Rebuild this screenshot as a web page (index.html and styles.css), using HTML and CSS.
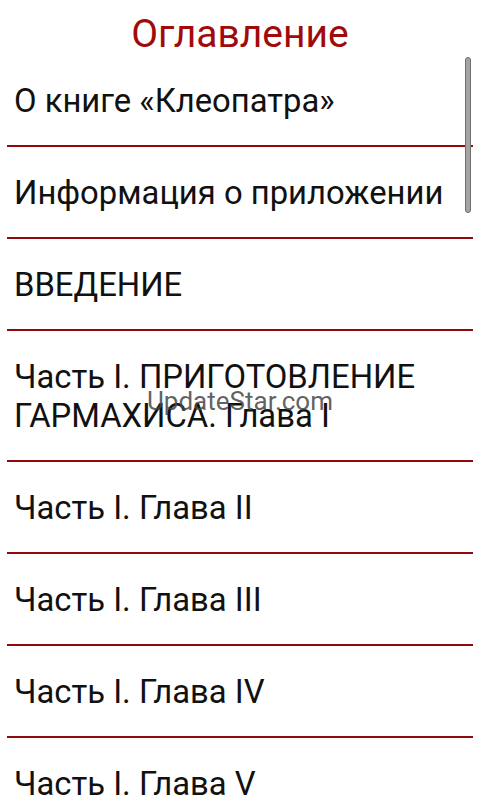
FILE: index.html
```html
<!DOCTYPE html>
<html lang="ru">
<head>
<meta charset="utf-8">
<title>Оглавление</title>
<link rel="stylesheet" href="styles.css">
</head>
<body>
<div class="screen">
  <header class="title">Оглавление</header>
  <ul class="toc">
    <li class="item">О книге «Клеопатра»</li>
    <li class="item">Информация о приложении</li>
    <li class="item">ВВЕДЕНИЕ</li>
    <li class="item">Часть I. ПРИГОТОВЛЕНИЕ ГАРМАХИСА. Глава I</li>
    <li class="item">Часть I. Глава II</li>
    <li class="item">Часть I. Глава III</li>
    <li class="item">Часть I. Глава IV</li>
    <li class="item">Часть I. Глава V</li>
  </ul>
  <div class="scrollbar"></div>
  <div class="watermark">UpdateStar.com</div>
</div>
</body>
</html>
```
FILE: styles.css
```css
html, body {
  margin: 0;
  padding: 0;
  background: #fff;
}
body {
  font-family: Roboto, "Noto Sans", sans-serif;
  color: #111;
}
.screen {
  position: relative;
  width: 480px;
  height: 800px;
  overflow: hidden;
}
.title {
  height: 55px;
  display: flex;
  align-items: center;
  justify-content: center;
  font-size: 39px;
  color: #a00a0a;
  padding-top: 12px;
  box-sizing: border-box;
}
.toc {
  list-style: none;
  margin: 0;
  padding: 0 7px;
}
.item {
  padding: 27px 7px 24px 7px;
  font-size: 32.8px;
  line-height: 39px;
  border-bottom: 2px solid #8e0b0b;
}
.scrollbar {
  position: absolute;
  left: 465px;
  top: 57px;
  width: 4px;
  height: 154px;
  background: #a4a4a4;
  border: 1px solid #6e6e6e;
  border-radius: 3px;
}
.watermark {
  position: absolute;
  left: 0;
  right: 0;
  top: 386px;
  text-align: center;
  font-size: 26px;
  color: rgba(70, 70, 70, 0.85);
  line-height: 30px;
}
```
